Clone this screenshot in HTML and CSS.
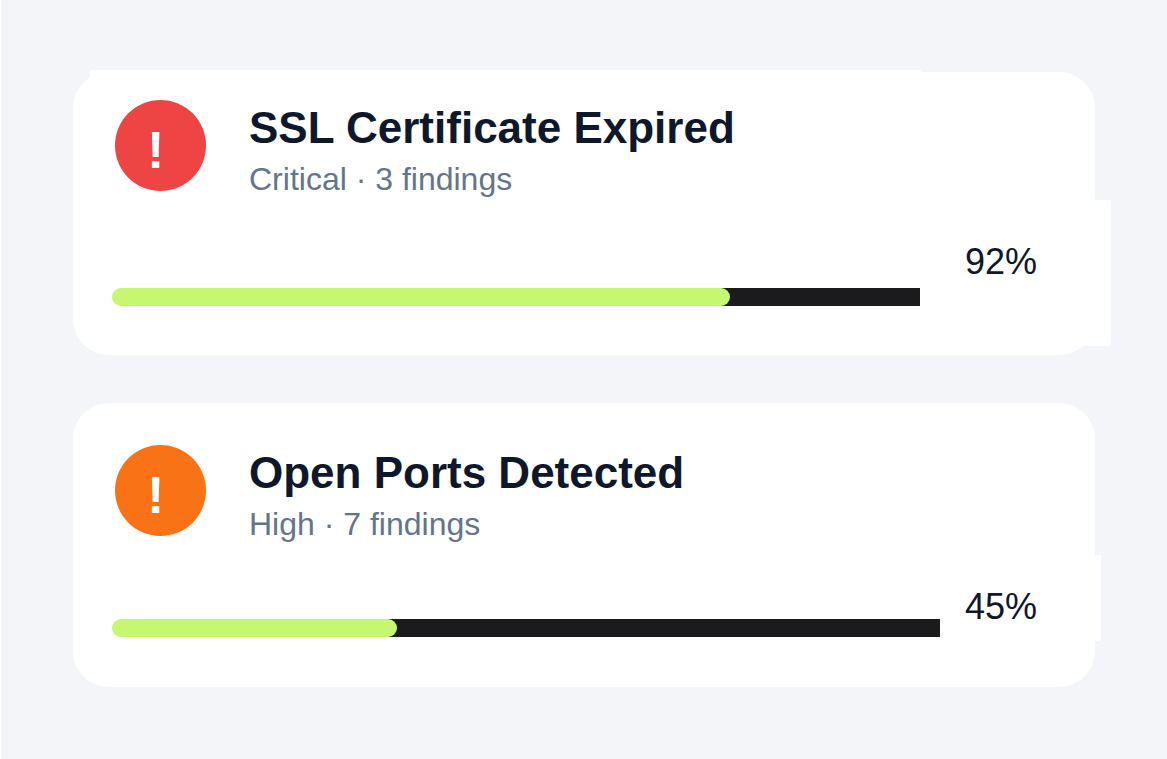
FILE: index.html
```html
<!DOCTYPE html>
<html lang="en">
<head>
<meta charset="utf-8">
<meta name="viewport" content="width=device-width, initial-scale=1">
<title>Security findings</title>
<link rel="stylesheet" href="styles.css">
</head>
<body>
<main class="findings">
  <article class="card card-critical">
    <header class="card-header">
      <span class="badge badge-critical">!</span>
      <div class="heading">
        <h2 class="title">SSL Certificate Expired</h2>
        <p class="subtitle">Critical · 3 findings</p>
      </div>
    </header>
    <div class="meter">
      <div class="track"><div class="fill" style="width: 76.5%"></div></div>
      <span class="percent">92%</span>
    </div>
  </article>
  <article class="card card-high">
    <header class="card-header">
      <span class="badge badge-high">!</span>
      <div class="heading">
        <h2 class="title">Open Ports Detected</h2>
        <p class="subtitle">High · 7 findings</p>
      </div>
    </header>
    <div class="meter">
      <div class="track"><div class="fill" style="width: 34.4%"></div></div>
      <span class="percent">45%</span>
    </div>
  </article>
</main>
</body>
</html>
```

FILE: styles.css
```css
* {
  box-sizing: border-box;
}

body {
  margin: 0;
  min-height: 100vh;
  border-left: 1px solid #fff;
  background: #f3f5f9;
  color: #0f172a;
  font-family: "Liberation Sans", Arial, sans-serif;
}

.findings {
  display: flex;
  flex-direction: column;
  gap: 48px;
  padding: 72px;
}

.card {
  position: relative;
  border-radius: 36px;
  background: #fff;
}

.card-critical {
  padding: 28px 0 49px 39px;
}

.card-high {
  padding: 42px 0 50px 39px;
}

/* Panels that reach past the card's edge */
.card::before,
.card::after {
  position: absolute;
  background: #fff;
}

.card-critical::before {
  content: "";
  top: -2px;
  left: 17px;
  right: 174px;
  height: 36px;
}

.card-critical::after {
  content: "";
  top: 128px;
  right: -16px;
  width: 64px;
  height: 146px;
}

.card-high::after {
  content: "";
  top: 152px;
  right: -6px;
  width: 64px;
  height: 86px;
}

.card-header {
  position: relative;
  z-index: 1;
  display: flex;
  align-items: flex-start;
  gap: 43px;
  padding-left: 3px;
}

.badge {
  flex: none;
  width: 91px;
  height: 91px;
  padding-left: 32px;
  border-radius: 50%;
  color: #fff;
  font-size: 52px;
  font-weight: 700;
  line-height: 100px;
}

.badge-critical {
  background: #ef4444;
}

.badge-high {
  background: #f97316;
}

.heading {
  padding-top: 4px;
}

.title {
  margin: 0;
  font-size: 44px;
  font-weight: 700;
  line-height: 48px;
}

.subtitle {
  margin: 9px 0 0;
  color: #64748b;
  font-size: 32px;
  line-height: 36px;
}

.meter {
  position: relative;
  z-index: 1;
  display: flex;
  align-items: flex-end;
  height: 66px;
  margin-top: 43px;
}

.card-high .meter {
  height: 52px;
}

.track {
  flex: 1;
  height: 18px;
  margin-right: 45px;
  background: linear-gradient(90deg, transparent 18px, #1b1b1d 18px);
}

.card-high .track {
  margin-right: 25px;
}

.fill {
  height: 100%;
  border-radius: 9px;
  background: #c6f770;
}

.percent {
  align-self: flex-start;
  width: 130px;
  font-size: 36px;
  line-height: 44px;
}
```
